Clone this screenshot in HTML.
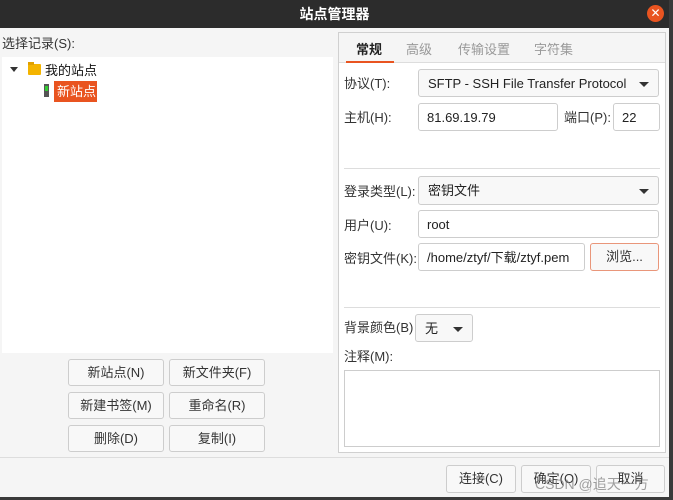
<!DOCTYPE html>
<html><head><meta charset="utf-8"><style>
*{box-sizing:border-box;margin:0;padding:0}
body{width:673px;height:500px;overflow:hidden;background:#3a3a3a;font-family:"Liberation Sans","Noto Sans CJK SC",sans-serif;font-size:13px;color:#333;position:relative}
.a{position:absolute}
.win{left:0;top:0;width:669px;height:497px;background:#f5f5f5}
.title{left:0;top:0;width:669px;height:28px;background:#2c2c2c;color:#fff;font-weight:bold;font-size:14px;text-align:center;line-height:28px}
.btn{position:absolute;background:#f8f8f8;border:1px solid #cdcdcd;border-radius:3px;text-align:center;line-height:25px;font-size:13px;color:#333}
.inp{position:absolute;background:#fff;border:1px solid #cdcdcd;border-radius:3px;line-height:28px;padding-left:8px;font-size:13px;color:#222}
.combo{position:absolute;background:#f8f8f8;border:1px solid #cdcdcd;border-radius:3px;line-height:28px;padding-left:9px;color:#222}
.arr{position:absolute;right:9px;top:12px;width:0;height:0;border-left:5px solid transparent;border-right:5px solid transparent;border-top:5px solid #333}
.lbl{position:absolute;font-size:13px;color:#333}
</style></head><body>
<div class="a win"></div>
<div class="a title">站点管理器</div>
<div class="a" style="left:647px;top:5px;width:17px;height:17px;border-radius:50%;background:#e95420;color:#fff;font-size:12px;text-align:center;line-height:17px">✕</div>

<div class="lbl" style="left:2px;top:33px">选择记录(S):</div>
<div class="a" style="left:2px;top:57px;width:331px;height:296px;background:#fff"></div>
<div class="a" style="left:10px;top:67px;width:0;height:0;border-left:4px solid transparent;border-right:4px solid transparent;border-top:5px solid #333"></div>
<div class="a" style="left:28px;top:64px;width:13px;height:11px;background:#f4b400;border-radius:1px"></div>
<div class="a" style="left:28px;top:62px;width:6px;height:3px;background:#e0a000"></div>
<div class="lbl" style="left:45px;top:60px;color:#111">我的站点</div>
<div class="a" style="left:44px;top:84px;width:5px;height:13px;background:#555"></div>
<div class="a" style="left:45px;top:86px;width:3px;height:5px;background:#3c3"></div>
<div class="a" style="left:54px;top:81px;width:43px;height:21px;background:#e95420;color:#fff;line-height:21px;padding-left:3px">新站点</div>

<div class="btn" style="left:68px;top:359px;width:96px;height:27px">新站点(N)</div>
<div class="btn" style="left:169px;top:359px;width:96px;height:27px">新文件夹(F)</div>
<div class="btn" style="left:68px;top:392px;width:96px;height:27px">新建书签(M)</div>
<div class="btn" style="left:169px;top:392px;width:96px;height:27px">重命名(R)</div>
<div class="btn" style="left:68px;top:425px;width:96px;height:27px">删除(D)</div>
<div class="btn" style="left:169px;top:425px;width:96px;height:27px">复制(I)</div>
<div class="a" style="left:0;top:457px;width:338px;height:1px;background:#ddd"></div>

<div class="a" style="left:338px;top:32px;width:328px;height:421px;border:1px solid #d0d0d0;background:#fff"></div>
<div class="a" style="left:339px;top:33px;width:326px;height:30px;background:#f5f5f5;border-bottom:1px solid #ddd"></div>
<div class="lbl" style="left:356px;top:39px;font-weight:bold;color:#222">常规</div>
<div class="a" style="left:346px;top:61px;width:48px;height:2px;background:#e95420"></div>
<div class="lbl" style="left:406px;top:39px;color:#999">高级</div>
<div class="lbl" style="left:458px;top:39px;color:#999">传输设置</div>
<div class="lbl" style="left:534px;top:39px;color:#999">字符集</div>

<div class="lbl" style="left:344px;top:73px">协议(T):</div>
<div class="combo" style="left:418px;top:69px;width:241px;height:28px">SFTP - SSH File Transfer Protocol<span class="arr"></span></div>
<div class="lbl" style="left:344px;top:107px">主机(H):</div>
<div class="inp" style="left:418px;top:103px;width:140px;height:28px">81.69.19.79</div>
<div class="lbl" style="left:564px;top:107px">端口(P):</div>
<div class="inp" style="left:613px;top:103px;width:47px;height:28px">22</div>
<div class="a" style="left:344px;top:168px;width:316px;height:1px;background:#ddd"></div>

<div class="lbl" style="left:344px;top:181px">登录类型(L):</div>
<div class="combo" style="left:418px;top:176px;width:241px;height:29px">密钥文件<span class="arr"></span></div>
<div class="lbl" style="left:344px;top:215px">用户(U):</div>
<div class="inp" style="left:418px;top:210px;width:241px;height:28px">root</div>
<div class="lbl" style="left:344px;top:248px">密钥文件(K):</div>
<div class="inp" style="left:418px;top:243px;width:167px;height:28px">/home/ztyf/下载/ztyf.pem</div>
<div class="btn" style="left:590px;top:243px;width:69px;height:28px;border-color:#e9967a;line-height:26px">浏览...</div>
<div class="a" style="left:344px;top:307px;width:316px;height:1px;background:#ddd"></div>

<div class="lbl" style="left:344px;top:317px">背景颜色(B)</div>
<div class="combo" style="left:415px;top:314px;width:58px;height:28px">无<span class="arr"></span></div>
<div class="lbl" style="left:344px;top:346px">注释(M):</div>
<div class="a" style="left:344px;top:370px;width:316px;height:77px;border:1px solid #cdcdcd"></div>

<div class="a" style="left:338px;top:457px;width:331px;height:1px;background:#ddd"></div>
<div class="btn" style="left:446px;top:465px;width:70px;height:28px;line-height:26px">连接(C)</div>
<div class="btn" style="left:521px;top:465px;width:70px;height:28px;line-height:26px">确定(O)</div>
<div class="btn" style="left:596px;top:465px;width:69px;height:28px;line-height:26px">取消</div>
<div class="a" style="left:535px;top:474px;font-size:14px;color:rgba(120,120,120,.7)">CSDN @追天一方</div>
</body></html>
